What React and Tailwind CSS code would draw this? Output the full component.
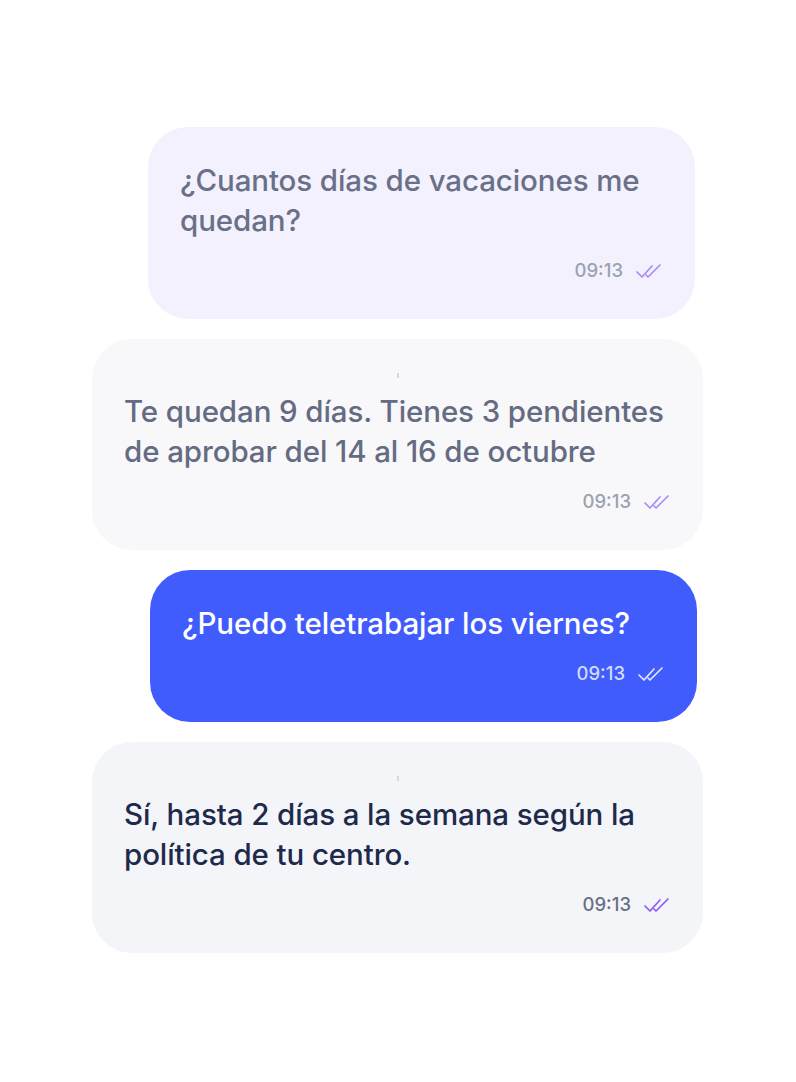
const messages = [
  {
    from: "me",
    text: "¿Cuantos días de vacaciones me quedan?",
    box: "ml-[148px] w-[547px] bg-[#f3f1fe] text-[#697088]",
    time: "text-[#9ba1b0]",
    check: "#a98bf5",
  },
  {
    from: "bot",
    text: "Te quedan 9 días. Tienes 3 pendientes de aprobar del 14 al 16 de octubre",
    box: "ml-[92px] w-[611px] bg-[#f8f8fb] text-[#646b82]",
    time: "text-[#9ba1b0]",
    check: "#a98bf5",
  },
  {
    from: "me",
    text: "¿Puedo teletrabajar los viernes?",
    box: "ml-[150px] w-[547px] bg-[#405cfc] text-white",
    time: "text-[#d3dbff]",
    check: "#e0e6ff",
  },
  {
    from: "bot",
    text: "Sí, hasta 2 días a la semana según la política de tu centro.",
    box: "ml-[92px] w-[611px] bg-[#f4f5f8] text-[#1e2a4c]",
    time: "text-[#687086]",
    check: "#8b5cf6",
  },
];

function Ticks({ color }) {
  return (
    <svg width="28" height="16" viewBox="0 0 28 16" fill="none" stroke={color} strokeWidth="1.7" strokeLinecap="round" strokeLinejoin="round">
      <path d="M2 9 L7 14 L17 3" />
      <path d="M11 12 L13 14 L25 2" />
    </svg>
  );
}

export default function App() {
  return (
    <main className="min-h-[1082px] bg-white pt-[127px] flex flex-col gap-[20px] font-['Inter',sans-serif]">
      {messages.map((m, i) => (
        <div key={i} className={`${m.box} rounded-[40px] px-8 pt-[33px] pb-[38px]`}>
          {/* marca del bot */}
          {m.from === "bot" && (
            <div className="h-[19px] flex justify-center">
              <div className="w-[2px] h-[5px] bg-[#d6d8de] mt-[1px]" />
            </div>
          )}
          <p className="text-[29.5px] leading-[40px] font-medium tracking-[-0.1px]">{m.text}</p>
          <div className="mt-[21px] h-5 flex items-center justify-end gap-3">
            <span className={`text-[18.5px] font-medium ${m.time}`}>09:13</span>
            <Ticks color={m.check} />
          </div>
        </div>
      ))}
    </main>
  );
}
